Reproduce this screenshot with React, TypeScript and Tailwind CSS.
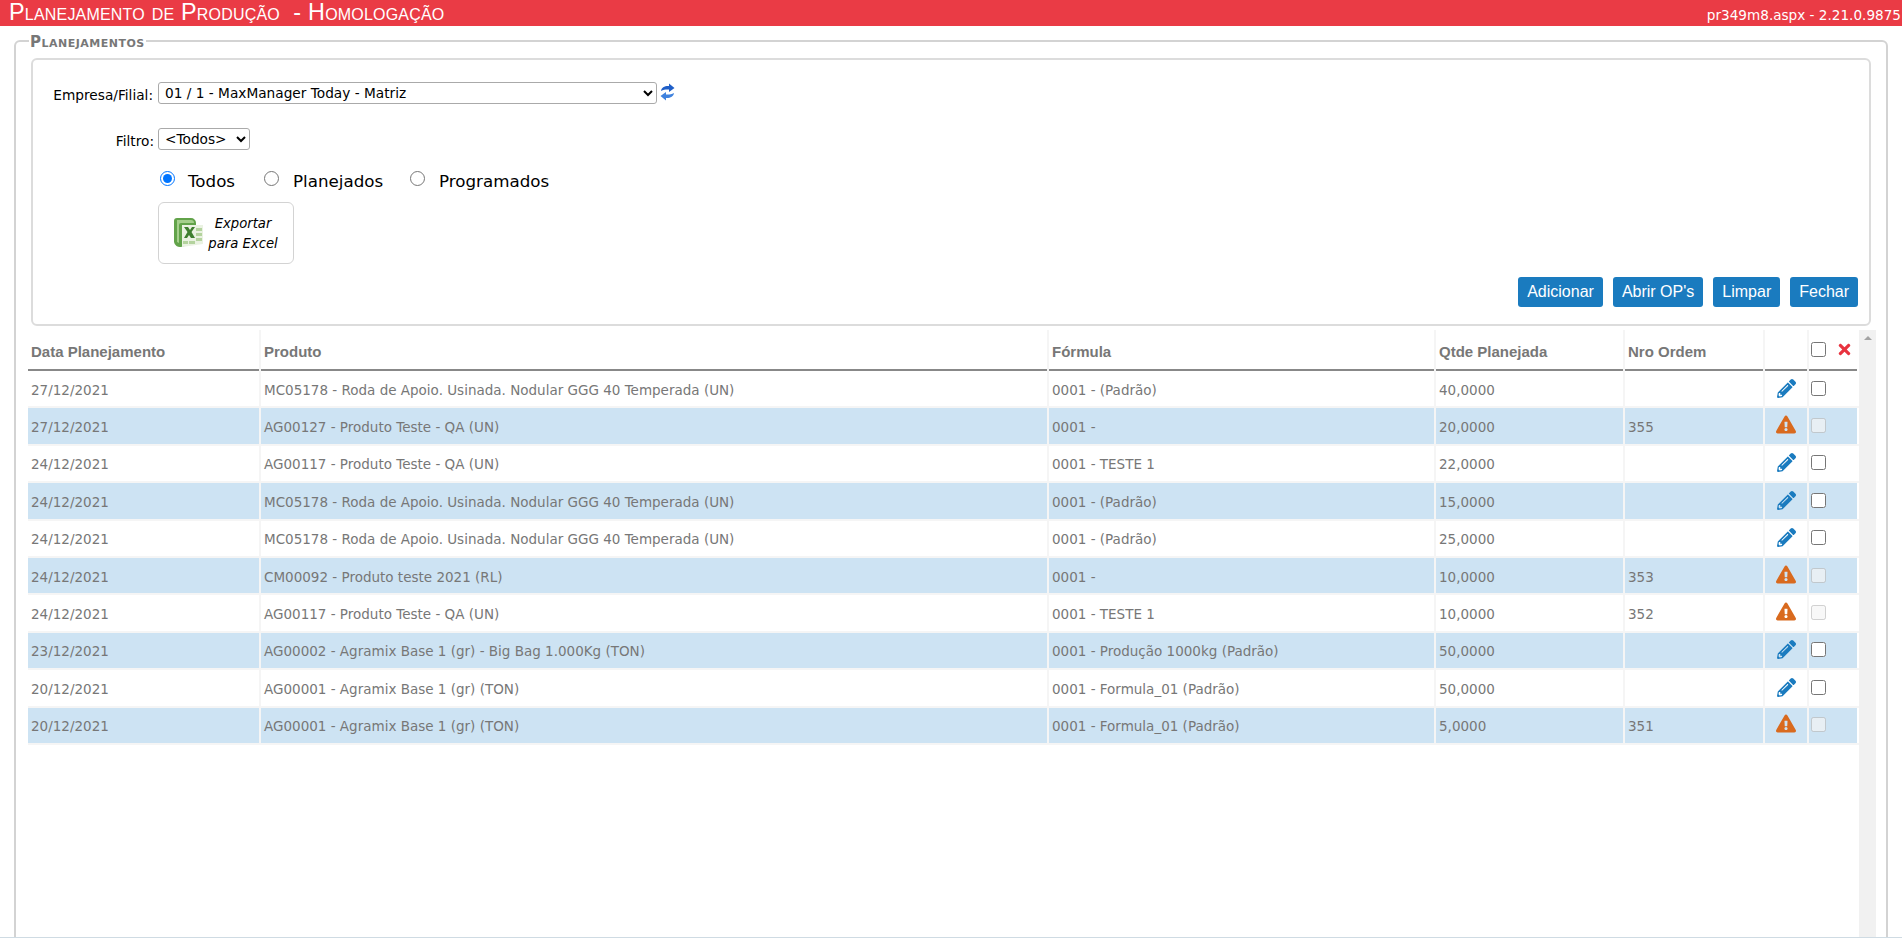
import { FaExclamationTriangle, FaPencilAlt, FaTimes } from "react-icons/fa";

const rows = [
  { data: "27/12/2021", produto: "MC05178 - Roda de Apoio. Usinada. Nodular GGG 40 Temperada (UN)", formula: "0001 - (Padrão)", qtde: "40,0000", ordem: "" },
  { data: "27/12/2021", produto: "AG00127 - Produto Teste - QA (UN)", formula: "0001 -", qtde: "20,0000", ordem: "355" },
  { data: "24/12/2021", produto: "AG00117 - Produto Teste - QA (UN)", formula: "0001 - TESTE 1", qtde: "22,0000", ordem: "" },
  { data: "24/12/2021", produto: "MC05178 - Roda de Apoio. Usinada. Nodular GGG 40 Temperada (UN)", formula: "0001 - (Padrão)", qtde: "15,0000", ordem: "" },
  { data: "24/12/2021", produto: "MC05178 - Roda de Apoio. Usinada. Nodular GGG 40 Temperada (UN)", formula: "0001 - (Padrão)", qtde: "25,0000", ordem: "" },
  { data: "24/12/2021", produto: "CM00092 - Produto teste 2021 (RL)", formula: "0001 -", qtde: "10,0000", ordem: "353" },
  { data: "24/12/2021", produto: "AG00117 - Produto Teste - QA (UN)", formula: "0001 - TESTE 1", qtde: "10,0000", ordem: "352" },
  { data: "23/12/2021", produto: "AG00002 - Agramix Base 1 (gr) - Big Bag 1.000Kg (TON)", formula: "0001 - Produção 1000kg (Padrão)", qtde: "50,0000", ordem: "" },
  { data: "20/12/2021", produto: "AG00001 - Agramix Base 1 (gr) (TON)", formula: "0001 - Formula_01 (Padrão)", qtde: "50,0000", ordem: "" },
  { data: "20/12/2021", produto: "AG00001 - Agramix Base 1 (gr) (TON)", formula: "0001 - Formula_01 (Padrão)", qtde: "5,0000", ordem: "351" },
];

const buttons = ["Adicionar", "Abrir OP's", "Limpar", "Fechar"];

function RefreshIcon() {
  return (
    <svg width="15" height="18" viewBox="0 0 15 18" className="mt-[1px] ml-[3px] shrink-0">
      <path d="M1 8C1.500 4.500 4.500 2.800 9 3V0.500L14.500 5 9 9V6.500C6 6.300 3.500 6.700 1 8z" fill="#1f5fc8" />
      <path d="M14 10C13.500 13.500 10.500 15.200 6 15V17.500L0.500 13 6 9V11.500C9 11.700 11.500 11.300 14 10z" fill="#3f82de" />
    </svg>
  );
}

function ExcelIcon() {
  return (
    <svg width="31" height="32" viewBox="0 0 31 32" className="shrink-0">
      <path d="M4 1h14a5 5 0 0 1 5 5v20l-15 4a6 6 0 0 1-7-5V4a3 3 0 0 1 3-3z" fill="#62a34a" />
      <path d="M4 3h14a3 3 0 0 1 3 3H8a2 2 0 0 0-2 2v18l-2-1z" fill="#a5cf8c" />
      <path d="M9 8h21v19l-21 3z" fill="#eaf2e2" />
      <path d="M23 11h6v3h-6zM23 16h6v3h-6zM23 21h6v3h-6zM10 24h5v3h-5zM16 24h6v3h-6z" fill="#b4d39e" />
      <path d="M11 10h4l2 3 2-3h3l-3.500 5 3.500 6h-4l-2-3-2 3h-3l3.500-6z" fill="#3f7f30" />
    </svg>
  );
}

export default function App() {
  return (
    <div className="h-[938px] overflow-hidden border-b border-[#cfdbe3] bg-white font-[DejaVu_Sans,sans-serif]">
      <div className="flex h-[26px] items-center justify-between bg-[#ea3b45] pr-[1px] pl-[9px] text-white">
        <h1 className="font-[Liberation_Sans,sans-serif] text-[23.4px] leading-none tracking-[0.2px] whitespace-pre [font-variant:small-caps]">
          Planejamento de Produção  - Homologação
        </h1>
        <span className="pt-[5px] text-[13.6px]">pr349m8.aspx - 2.21.0.9875</span>
      </div>

      <fieldset className="mx-[14px] mt-[7px] h-[922px] rounded-[6px] border-2 border-[#d3d3d3] px-[15px] pt-[10px]">
        <legend className="-ml-[2px] px-[1px] pt-[4px] text-[15px] leading-[11px] font-bold tracking-[0.5px] text-[#777] [font-variant:small-caps]">
          Planejamentos
        </legend>

        <div className="h-[268px] rounded-[6px] border-2 border-[#dcdcdc] pt-[22px] pl-[20px] text-[13.7px] text-black">
          <div className="flex items-start">
            <label className="w-[105px] pt-[3px] pr-[5px] text-right whitespace-nowrap">Empresa/Filial:</label>
            <select className="h-[22px] w-[499px] rounded-[3px] border border-[#aaa] bg-white pl-[2px] text-[13.7px]">
              <option>01 / 1 - MaxManager Today - Matriz</option>
            </select>
            <RefreshIcon />
          </div>

          <div className="mt-[22px] flex items-start">
            <label className="w-[105px] pt-[3px] pr-[4px] text-right">Filtro:</label>
            <select className="h-[22px] w-[92px] rounded-[3px] border border-[#aaa] bg-white pl-[2px] text-[13.7px]">
              <option>&lt;Todos&gt;</option>
            </select>
          </div>

          <div className="mt-[18px] flex items-center pl-[107px] text-[16.7px]">
            <input type="radio" name="tipo" defaultChecked className="mb-[7px] h-[15px] w-[15px]" />
            <span className="ml-[13px] w-[76px]">Todos</span>
            <input type="radio" name="tipo" className="mb-[7px] h-[15px] w-[15px]" />
            <span className="ml-[14px] w-[117px]">Planejados</span>
            <input type="radio" name="tipo" className="mb-[7px] h-[15px] w-[15px]" />
            <span className="ml-[14px]">Programados</span>
          </div>

          <div className="mt-[8px] ml-[105px] flex h-[62px] w-[136px] items-center rounded-[6px] border border-[#d3d3d3] pl-[14px]">
            <ExcelIcon />
            <div className="ml-[3px] flex-1 pt-[2px] pr-[14px] text-center text-[13.2px] leading-[20px] italic">
              Exportar
              <br />
              para Excel
            </div>
          </div>

          <div className="mt-[13px] flex justify-end gap-[10px] pr-[11px]">
            {buttons.map((label) => (
              <button
                key={label}
                className="h-[30px] rounded-[3px] bg-[#1a7bbf] px-[9px] font-[Liberation_Sans,sans-serif] text-[16px] text-white"
              >
                {label}
              </button>
            ))}
          </div>
        </div>

        <div className="mt-[4px] -mr-[10px] -ml-[3px] flex h-[700px]">
          <div className="w-[1831px]">
            <table className="w-full table-fixed border-collapse text-[13.5px] text-[#777]">
              <colgroup>
                <col className="w-[232px]" />
                <col className="w-[788px]" />
                <col className="w-[387px]" />
                <col className="w-[189px]" />
                <col className="w-[140px]" />
                <col className="w-[44px]" />
                <col />
              </colgroup>
              <thead>
                <tr className="h-[40px] border-b-2 border-[#888] text-left font-[Liberation_Sans,sans-serif] text-[15px] font-bold">
                  <th className="border-r-2 border-[#f5f5f5] pt-[6px] pl-[3px]">Data Planejamento</th>
                  <th className="border-r-2 border-[#f5f5f5] pt-[6px] pl-[3px]">Produto</th>
                  <th className="border-r-2 border-[#f5f5f5] pt-[6px] pl-[3px]">Fórmula</th>
                  <th className="border-r-2 border-[#f5f5f5] pt-[6px] pl-[3px]">Qtde Planejada</th>
                  <th className="border-r-2 border-[#f5f5f5] pt-[6px] pl-[3px]">Nro Ordem</th>
                  <th className="border-r-2 border-[#f5f5f5]"></th>
                  <th>
                    <div className="flex items-center pl-[2px]">
                      <input type="checkbox" className="h-[15px] w-[15px]" />
                      <FaTimes className="ml-[11px] h-[17px] w-[15px] text-[#e8333f]" />
                    </div>
                  </th>
                </tr>
              </thead>
              <tbody>
                {rows.map((row, i) => {
                  const hasOrder = row.ordem !== "";
                  const cell = "border-r-2 border-b-2 border-[#f5f5f5] pt-[2px] pl-[3px]";
                  return (
                    <tr key={i} className={i % 2 === 1 ? "h-[37.4px] bg-[#cde3f3]" : "h-[37.4px]"}>
                      <td className={cell}>{row.data}</td>
                      <td className={cell}>{row.produto}</td>
                      <td className={cell}>{row.formula}</td>
                      <td className={cell}>{row.qtde}</td>
                      <td className={cell}>{row.ordem}</td>
                      <td className="border-r-2 border-b-2 border-[#f5f5f5]">
                        {hasOrder ? (
                          <FaExclamationTriangle className="mx-auto mb-[3px] h-[19px] w-[20px] text-[#d96a1e]" />
                        ) : (
                          <FaPencilAlt className="mx-auto mb-[1px] h-[19px] w-[19px] text-[#1a7bbf]" />
                        )}
                      </td>
                      <td className="border-r-2 border-b-2 border-r-white border-b-[#f5f5f5] pl-[2px]">
                        <input type="checkbox" disabled={hasOrder} className="mb-[1px] block h-[15px] w-[15px]" />
                      </td>
                    </tr>
                  );
                })}
              </tbody>
            </table>
          </div>
          <div className="flex w-[17px] justify-center bg-[#f1f1f1] pt-[6px]">
            <div className="h-0 w-0 border-x-[4px] border-b-[4px] border-x-transparent border-b-[#a3a3a3]" />
          </div>
        </div>
      </fieldset>
    </div>
  );
}
